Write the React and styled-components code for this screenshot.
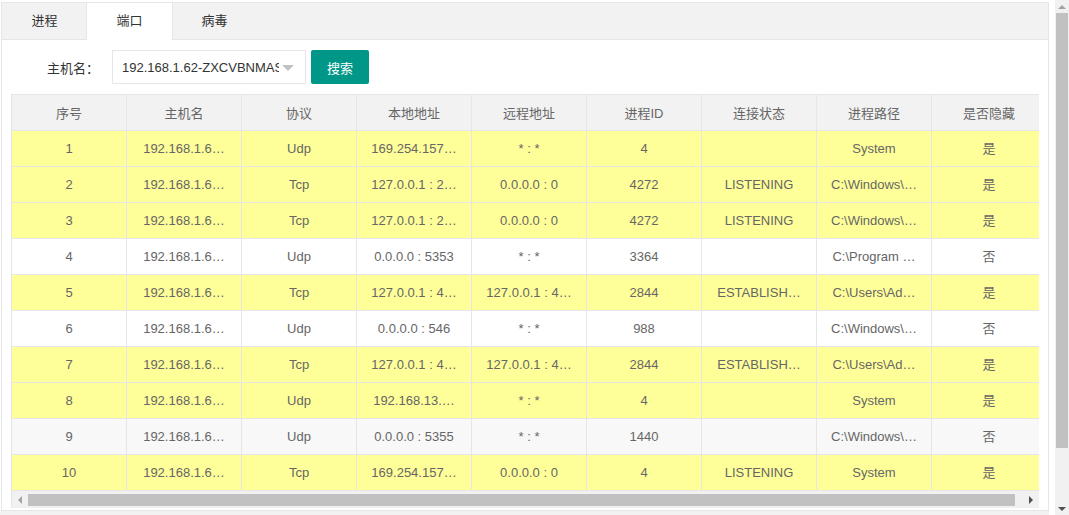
import React from "react";
import styled, { createGlobalStyle } from "styled-components";

const GlobalStyle = createGlobalStyle`
  html, body {
    margin: 0;
    padding: 0;
    background: #ffffff;
  }
  body {
    font-family: "Liberation Sans", "Noto Sans CJK SC", sans-serif;
    font-size: 13px;
    color: #666;
  }
`;

const columns = ["序号", "主机名", "协议", "本地地址", "远程地址", "进程ID", "连接状态", "进程路径", "是否隐藏"];

const host = "192.168.1.62-ZXCVBNMAS";
const hostShort = "192.168.1.6…";

// cell texts as the grid shows them (long values are cut by the grid)
const rows = [
  { tone: "hit", cells: ["1", hostShort, "Udp", "169.254.157…", "* : *", "4", "", "System", "是"] },
  { tone: "hit", cells: ["2", hostShort, "Tcp", "127.0.0.1 : 2…", "0.0.0.0 : 0", "4272", "LISTENING", "C:\\Windows\\…", "是"] },
  { tone: "hit", cells: ["3", hostShort, "Tcp", "127.0.0.1 : 2…", "0.0.0.0 : 0", "4272", "LISTENING", "C:\\Windows\\…", "是"] },
  { tone: "plain", cells: ["4", hostShort, "Udp", "0.0.0.0 : 5353", "* : *", "3364", "", "C:\\Program …", "否"] },
  { tone: "hit", cells: ["5", hostShort, "Tcp", "127.0.0.1 : 4…", "127.0.0.1 : 4…", "2844", "ESTABLISH…", "C:\\Users\\Ad…", "是"] },
  { tone: "plain", cells: ["6", hostShort, "Udp", "0.0.0.0 : 546", "* : *", "988", "", "C:\\Windows\\…", "否"] },
  { tone: "hit", cells: ["7", hostShort, "Tcp", "127.0.0.1 : 4…", "127.0.0.1 : 4…", "2844", "ESTABLISH…", "C:\\Users\\Ad…", "是"] },
  { tone: "hit", cells: ["8", hostShort, "Udp", "192.168.13.…", "* : *", "4", "", "System", "是"] },
  { tone: "hover", cells: ["9", hostShort, "Udp", "0.0.0.0 : 5355", "* : *", "1440", "", "C:\\Windows\\…", "否"] },
  { tone: "hit", cells: ["10", hostShort, "Tcp", "169.254.157…", "0.0.0.0 : 0", "4", "LISTENING", "System", "是"] },
];

const rowColors = {
  hit: "#ffff99",
  plain: "#ffffff",
  hover: "#f8f8f8",
};

function Tabs() {
  const tabs = ["进程", "端口", "病毒"];
  return (
    <TabBar>
      {tabs.map((t, i) => (
        <Tab key={t} active={i === 1}>
          {t}
        </Tab>
      ))}
    </TabBar>
  );
}

function App() {
  return (
    <>
      <GlobalStyle />
      <Screen>
        <LeftColumn>
          <Panel>
            <Tabs />
            <Content>
              <Toolbar>
                <Label>主机名：</Label>
                <Select>
                  <SelectText>{host}</SelectText>
                  <Caret />
                </Select>
                <SearchBtn>搜索</SearchBtn>
              </Toolbar>
              <TableBox>
                <Table>
                  <colgroup>
                    {columns.map((c) => (
                      <col key={c} style={{ width: 115 }} />
                    ))}
                  </colgroup>
                  <thead>
                    <tr>
                      {columns.map((c) => (
                        <Th key={c}>{c}</Th>
                      ))}
                    </tr>
                  </thead>
                  <tbody>
                    {rows.map((r) => (
                      <Tr key={r.cells[0]} tone={r.tone}>
                        {r.cells.map((v, i) => (
                          <Td key={i}>
                            <CellText>{v}</CellText>
                          </Td>
                        ))}
                      </Tr>
                    ))}
                  </tbody>
                </Table>
                <HScroll>
                  <ArrowBtn>
                    <ArrowLeft />
                  </ArrowBtn>
                  <HTrack>
                    <HThumb />
                  </HTrack>
                  <ArrowBtn>
                    <ArrowRight />
                  </ArrowBtn>
                </HScroll>
              </TableBox>
            </Content>
          </Panel>
          <BottomStrip />
        </LeftColumn>
        <VScroll>
          <VArrowBtn>
            <ArrowUp />
          </VArrowBtn>
          <VTrack>
            <VThumb />
          </VTrack>
          <VArrowBtn>
            <ArrowDown />
          </VArrowBtn>
        </VScroll>
      </Screen>
    </>
  );
}

const Screen = styled.div`
  display: flex;
  width: 1069px;
  height: 515px;
  overflow: hidden;
  background: #ffffff;
`;

const LeftColumn = styled.div`
  display: flex;
  flex-direction: column;
  width: 1049px;
  margin-right: 6px;
  padding: 2px 0 0 1px;
  box-sizing: border-box;
`;

const Panel = styled.div`
  display: flex;
  flex-direction: column;
  width: 1048px;
  height: 509px;
  border: 1px solid #e6e6e6;
  box-sizing: border-box;
  overflow: hidden;
  background: #ffffff;
`;

const BottomStrip = styled.div`
  flex: 1;
  margin-left: -1px;
  background: #f2f2f2;
`;

const TabBar = styled.div`
  display: flex;
  height: 37px;
  background: #f2f2f2;
  border-bottom: 1px solid #e6e6e6;
  box-sizing: border-box;
  flex-shrink: 0;
`;

const Tab = styled.div`
  height: 37px;
  line-height: 35px;
  text-align: center;
  font-size: 13px;
  color: #333;
  box-sizing: border-box;
  background: ${(p) => (p.active ? "#ffffff" : "transparent")};
  border-left: 1px solid ${(p) => (p.active ? "#e6e6e6" : "transparent")};
  border-right: 1px solid ${(p) => (p.active ? "#e6e6e6" : "transparent")};
  margin-left: ${(p) => (p.active ? "-1px" : "0")};
  margin-right: ${(p) => (p.active ? "-1px" : "0")};
  width: ${(p) => (p.active ? "87px" : "85px")};
`;

const Content = styled.div`
  display: flex;
  flex-direction: column;
  gap: 10px;
  padding: 10px 9px 0 9px;
`;

const Toolbar = styled.div`
  display: flex;
  align-items: center;
  height: 34px;
  flex-shrink: 0;
`;

const Label = styled.div`
  width: 101px;
  padding-right: 13px;
  box-sizing: border-box;
  text-align: right;
  font-size: 13px;
  color: #333;
`;

const Select = styled.div`
  position: relative;
  width: 194px;
  height: 34px;
  border: 1px solid #e6e6e6;
  box-sizing: border-box;
  padding: 0 26px 0 9px;
  display: flex;
  align-items: center;
  background: #fff;
`;

const SelectText = styled.span`
  font-size: 13px;
  color: #333;
  white-space: nowrap;
  overflow: hidden;
`;

const Caret = styled.i`
  position: absolute;
  right: 11px;
  top: 14px;
  width: 0;
  height: 0;
  border-left: 6px solid transparent;
  border-right: 6px solid transparent;
  border-top: 6px solid #c2c2c2;
`;

const SearchBtn = styled.button`
  margin-left: 5px;
  width: 58px;
  height: 34px;
  border: none;
  border-radius: 2px;
  background: #009688;
  color: #fff;
  font-family: inherit;
  font-size: 13px;
  padding: 0;
`;

const TableBox = styled.div`
  width: 1028px;
  overflow: hidden;
  border-left: 1px solid #e6e6e6;
  box-sizing: border-box;
  flex-shrink: 0;
`;

const Table = styled.table`
  table-layout: fixed;
  width: 1035px;
  border-collapse: collapse;
  margin-left: -1px;
`;

const Th = styled.th`
  height: 36px;
  box-sizing: border-box;
  padding: 0 8px;
  background: #f2f2f2;
  border: 1px solid #e6e6e6;
  font-weight: normal;
  font-size: 13px;
  color: #666;
  text-align: center;
  white-space: nowrap;
  overflow: hidden;
`;

const Tr = styled.tr`
  height: 36px;
  background: ${(p) => rowColors[p.tone]};
`;

const Td = styled.td`
  height: 36px;
  box-sizing: border-box;
  padding: 0 8px;
  border: 1px solid #e6e6e6;
  text-align: center;
`;

const CellText = styled.div`
  font-size: 13px;
  line-height: 16px;
  color: #666;
  white-space: nowrap;
  overflow: hidden;
  text-overflow: ellipsis;
`;

const HScroll = styled.div`
  display: flex;
  height: 17px;
  background: #f1f1f1;
`;

const ArrowBtn = styled.div`
  width: 16px;
  display: flex;
  align-items: center;
  justify-content: center;
`;

const HTrack = styled.div`
  flex: 1;
  display: flex;
  align-items: center;
  padding-right: 8px;
`;

const HThumb = styled.div`
  flex: 1;
  height: 12px;
  background: #c1c1c1;
`;

const ArrowLeft = styled.i`
  width: 0;
  height: 0;
  border-top: 4px solid transparent;
  border-bottom: 4px solid transparent;
  border-right: 4px solid #a3a3a3;
`;

const ArrowRight = styled.i`
  width: 0;
  height: 0;
  border-top: 4px solid transparent;
  border-bottom: 4px solid transparent;
  border-left: 4px solid #505050;
`;

const VScroll = styled.div`
  display: flex;
  flex-direction: column;
  width: 14px;
  height: 515px;
  background: #f1f1f1;
`;

const VArrowBtn = styled.div`
  height: 13px;
  display: flex;
  align-items: center;
  justify-content: center;
`;

const VTrack = styled.div`
  flex: 1;
  display: flex;
  flex-direction: column;
  padding: 0 1px;
`;

const VThumb = styled.div`
  height: 435px;
  background: #c1c1c1;
`;

const ArrowUp = styled.i`
  width: 0;
  height: 0;
  border-left: 4px solid transparent;
  border-right: 4px solid transparent;
  border-bottom: 4px solid #a3a3a3;
`;

const ArrowDown = styled.i`
  width: 0;
  height: 0;
  border-left: 4px solid transparent;
  border-right: 4px solid transparent;
  border-top: 4px solid #505050;
`;

export default App;
